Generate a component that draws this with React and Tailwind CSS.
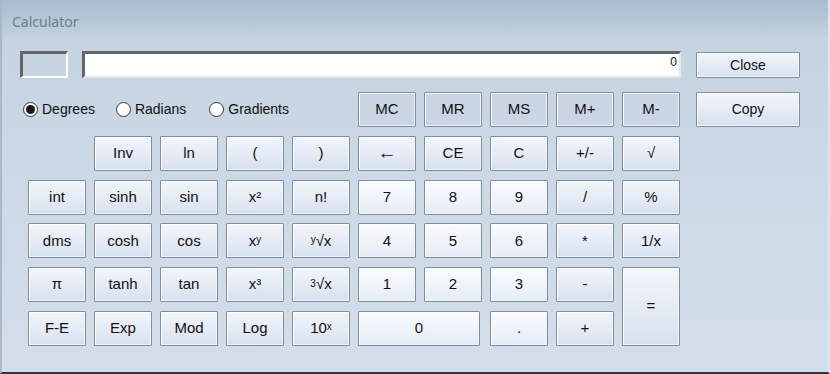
import React from "react";

const F = { fontFamily: '"Liberation Sans", Arial, sans-serif' };

function Btn({ children, kind = "fn", className = "" }) {
  const bg =
    kind === "mem"
      ? "bg-[#cad6e3]"
      : kind === "num"
      ? "bg-[linear-gradient(to_bottom,#fafcfe,#e4ecf5)]"
      : "bg-[linear-gradient(to_bottom,#f3f6fb,#d6e1ee)]";
  return (
    <div
      className={`flex items-center justify-center border border-[#7f8e9d] rounded-[1px] shadow-[inset_1px_1px_0_#ffffff,inset_-1px_-1px_0_#f2f6fa] text-[15px] text-[#111] ${bg} ${className}`}
      style={F}
    >
      {children}
    </div>
  );
}

function Radio({ label, checked }) {
  return (
    <div className="flex items-center gap-[4px]">
      <div className="w-[15px] h-[15px] rounded-full border border-[#333] bg-white flex items-center justify-center">
        {checked && <div className="w-[9px] h-[9px] rounded-full bg-[#1a1a1a]" />}
      </div>
      <span className="text-[14px] text-[#111]" style={F}>
        {label}
      </span>
    </div>
  );
}

const Sup = ({ c }) => <sup className="text-[10px] relative -top-[1px]">{c}</sup>;

export default function App() {
  return (
    <div className="w-[830px] h-[374px] relative overflow-hidden bg-[linear-gradient(to_bottom,#a8bbcc_0px,#c5d3e1_40px,#cbd8e5_150px,#d3dee9_100%)] border-l-[2px] border-l-[#a9b9c9] border-b-[2px] border-b-[#333] border-r-[2px] border-r-[#dde6ef]">
      <div
        className="h-[51px] pl-[10px] pt-[11px] text-[14px] leading-[22px] text-[#6e7c8a]"
        style={{ fontFamily: '"Noto Sans", "Open Sans", sans-serif' }}
      >
        Calculator
      </div>
      <div className="flex pl-[18px]">
        <div className="flex flex-col">
          <div className="flex">
            <div className="w-[48px] h-[27px] border-t-[3px] border-l-[3px] border-t-[#666] border-l-[#666] border-b-[2px] border-r-[2px] border-b-white border-r-white" />
            <div
              className="ml-[14px] w-[599px] h-[27px] bg-white border-t-[3px] border-l-[3px] border-t-[#666] border-l-[#666] border-b-[2px] border-r-[2px] border-b-[#e2e8ee] border-r-[#e2e8ee] flex items-start justify-end pr-[2px] pt-[1px] text-[12px] leading-[14px] text-[#111]"
              style={F}
            >
              0
            </div>
          </div>
          <div className="mt-[14px] ml-[8px] grid grid-cols-[repeat(10,58px)] grid-rows-[repeat(6,35px)] gap-x-[8px] gap-y-[8.8px]">
            <div className="col-span-5 flex items-center -ml-[5px]">
              <Radio label="Degrees" checked />
              <div className="ml-[21px]">
                <Radio label="Radians" />
              </div>
              <div className="ml-[23px]">
                <Radio label="Gradients" />
              </div>
            </div>
            <Btn kind="mem">MC</Btn>
            <Btn kind="mem">MR</Btn>
            <Btn kind="mem">MS</Btn>
            <Btn kind="mem">M+</Btn>
            <Btn kind="mem">M-</Btn>

            <div />
            <Btn>Inv</Btn>
            <Btn>ln</Btn>
            <Btn>(</Btn>
            <Btn>)</Btn>
            <Btn className="!text-[19px]">←</Btn>
            <Btn>CE</Btn>
            <Btn>C</Btn>
            <Btn>+/-</Btn>
            <Btn>√</Btn>

            <Btn>int</Btn>
            <Btn>sinh</Btn>
            <Btn>sin</Btn>
            <Btn>x²</Btn>
            <Btn>n!</Btn>
            <Btn kind="num">7</Btn>
            <Btn kind="num">8</Btn>
            <Btn kind="num">9</Btn>
            <Btn>/</Btn>
            <Btn>%</Btn>

            <Btn>dms</Btn>
            <Btn>cosh</Btn>
            <Btn>cos</Btn>
            <Btn>
              x<Sup c="y" />
            </Btn>
            <Btn>
              <Sup c="y" />√x
            </Btn>
            <Btn kind="num">4</Btn>
            <Btn kind="num">5</Btn>
            <Btn kind="num">6</Btn>
            <Btn>*</Btn>
            <Btn>1/x</Btn>

            <Btn>π</Btn>
            <Btn>tanh</Btn>
            <Btn>tan</Btn>
            <Btn>x³</Btn>
            <Btn>
              <Sup c="3" />√x
            </Btn>
            <Btn kind="num">1</Btn>
            <Btn kind="num">2</Btn>
            <Btn kind="num">3</Btn>
            <Btn>-</Btn>
            <Btn className="row-span-2">=</Btn>

            <Btn>F-E</Btn>
            <Btn>Exp</Btn>
            <Btn>Mod</Btn>
            <Btn>Log</Btn>
            <Btn>
              10<Sup c="x" />
            </Btn>
            <Btn kind="num" className="col-span-2 mr-[2px]">0</Btn>
            <Btn kind="num">.</Btn>
            <Btn>+</Btn>
          </div>
        </div>
        <div className="ml-[15px] w-[104px] flex flex-col">
          <Btn className="mt-[1px] h-[26px] !text-[14px]">Close</Btn>
          <Btn className="mt-[14px] h-[35px] !text-[14px]">Copy</Btn>
        </div>
      </div>
    </div>
  );
}
